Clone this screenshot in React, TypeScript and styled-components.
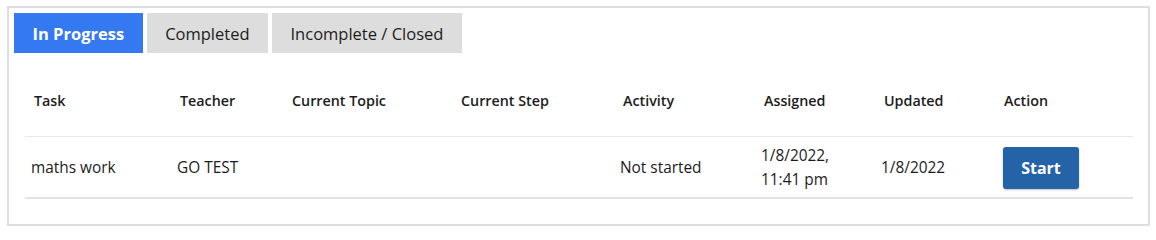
import React from "react";
import styled, { createGlobalStyle } from "styled-components";

const GlobalStyle = createGlobalStyle`
  body {
    margin: 0;
    background: #ffffff;
    font-family: "Open Sans", "Liberation Sans", sans-serif;
    color: #1c1c1c;
  }
`;

type Row = {
  task: string;
  teacher: string;
  topic: string;
  step: string;
  activity: string;
  assigned: string[];
  updated: string;
};

const rows: Row[] = [
  {
    task: "maths work",
    teacher: "GO TEST",
    topic: "",
    step: "",
    activity: "Not started",
    assigned: ["1/8/2022,", "11:41 pm"],
    updated: "1/8/2022",
  },
];

const tabs = ["In Progress", "Completed", "Incomplete / Closed"];
const headers = ["Task", "Teacher", "Current Topic", "Current Step", "Activity", "Assigned", "Updated", "Action"];

const App: React.FC = () => {
  return (
    <>
      <GlobalStyle />
      <Panel>
        <TabBar>
          {tabs.map((t, i) => (
            <Tab key={t} $active={i === 0}>
              {t}
            </Tab>
          ))}
        </TabBar>
        <Table>
          <HeadRow>
            {headers.map((h) => (
              <HeadCell key={h}>{h}</HeadCell>
            ))}
          </HeadRow>
          {rows.map((r) => (
            <BodyRow key={r.task}>
              <Cell>{r.task}</Cell>
              <Cell>{r.teacher}</Cell>
              <Cell>{r.topic}</Cell>
              <Cell>{r.step}</Cell>
              <Cell>{r.activity}</Cell>
              <Cell>
                {r.assigned.map((line) => (
                  <div key={line}>{line}</div>
                ))}
              </Cell>
              <Cell>{r.updated}</Cell>
              <Cell>
                <StartButton>Start</StartButton>
              </Cell>
            </BodyRow>
          ))}
        </Table>
      </Panel>
    </>
  );
};

export default App;

const Panel = styled.div`
  box-sizing: border-box;
  width: 1143px;
  height: 220px;
  margin: 6px 0 0 7px;
  padding: 5px 0 0 5px;
  border: 2px solid #dedede;
`;

const TabBar = styled.div`
  display: flex;
  gap: 4px;
  height: 40px;
`;

const Tab = styled.button<{ $active?: boolean }>`
  border: none;
  margin: 0;
  padding: 0 18.5px;
  height: 40px;
  font-family: inherit;
  font-size: 16.5px;
  font-weight: ${(p) => (p.$active ? 700 : 400)};
  color: ${(p) => (p.$active ? "#ffffff" : "#1c1c1c")};
  background: ${(p) => (p.$active ? "#3479f2" : "#dddddd")};
  cursor: pointer;
`;

const Table = styled.div`
  margin: 17px 15px 0 11px;
  border-bottom: 2px solid #e4e4e4;
`;

const columns = "146px 112px 169px 162px 141px 120px 122px 1fr";

const HeadRow = styled.div`
  display: grid;
  grid-template-columns: ${columns};
  border-bottom: 1px solid #e9e9e9;
`;

const HeadCell = styled.div`
  padding: 21px 0 25px 9px;
  font-size: 14.3px;
  font-weight: 600;
  line-height: 20px;
  color: #1c1c1c;

  &:last-child {
    padding-left: 7px;
  }
`;

const BodyRow = styled.div`
  display: grid;
  grid-template-columns: ${columns};
  height: 60px;
  align-items: center;
`;

const Cell = styled.div`
  padding: 1px 0 0 6px;
  font-size: 15.4px;
  line-height: 24px;
`;

const StartButton = styled.button`
  display: block;
  width: 76px;
  height: 42px;
  border: none;
  border-radius: 3px;
  background: #2563a9;
  color: #ffffff;
  font-family: inherit;
  font-size: 16px;
  font-weight: 700;
  box-shadow: 0 1px 2px rgba(0, 0, 0, 0.25);
  cursor: pointer;
`;
